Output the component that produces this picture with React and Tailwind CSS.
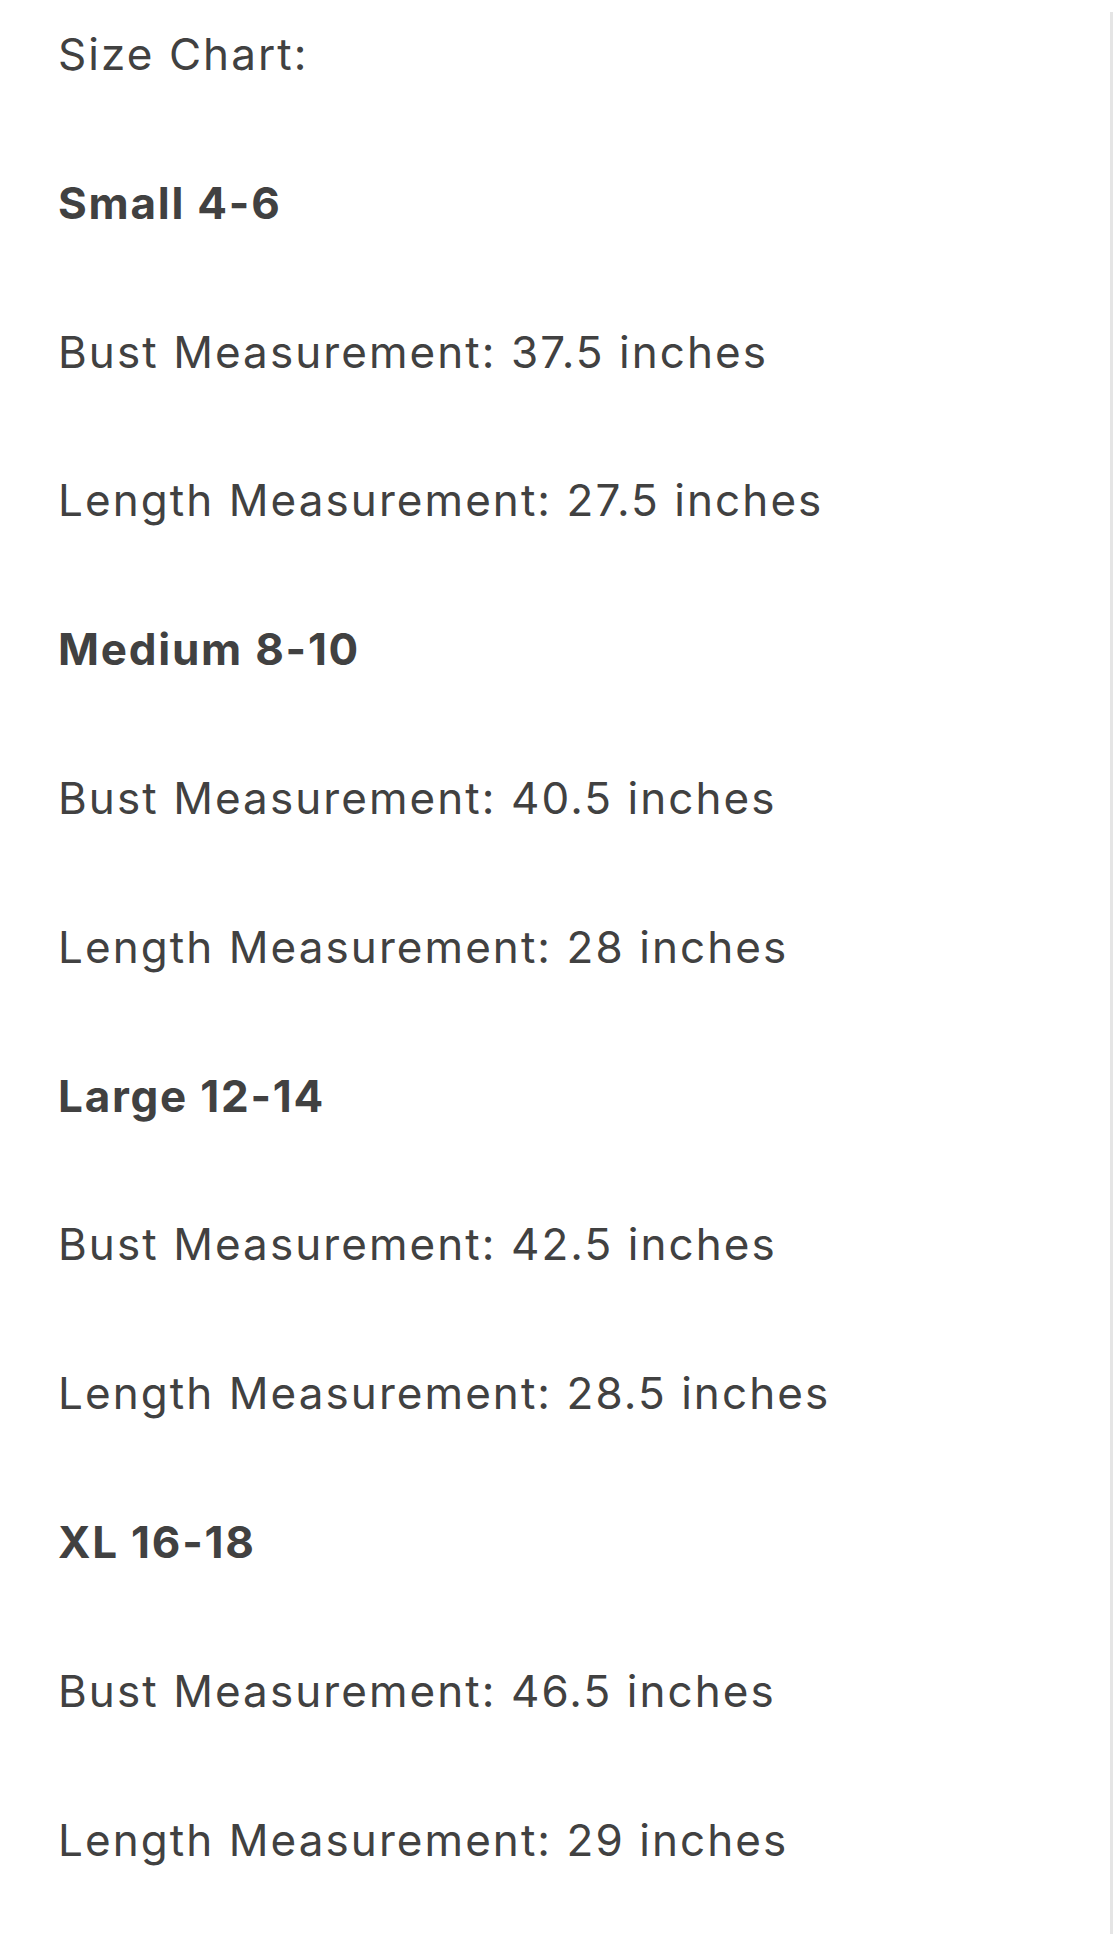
const lines = [
  { text: 'Size Chart:' },
  { text: 'Small 4-6', bold: true },
  { text: 'Bust Measurement: 37.5 inches' },
  { text: 'Length Measurement: 27.5 inches' },
  { text: 'Medium 8-10', bold: true },
  { text: 'Bust Measurement: 40.5 inches' },
  { text: 'Length Measurement: 28 inches' },
  { text: 'Large 12-14', bold: true },
  { text: 'Bust Measurement: 42.5 inches' },
  { text: 'Length Measurement: 28.5 inches' },
  { text: 'XL 16-18', bold: true },
  { text: 'Bust Measurement: 46.5 inches' },
  { text: 'Length Measurement: 29 inches' },
]

export default function App() {
  return (
    <div className="flex h-[1934px] w-[1113px] overflow-hidden bg-white">
      <div
        className="flex-1 pl-[58px] pt-[14px] text-[44px] text-[#414141]"
        style={{ fontFamily: 'Inter, "Noto Sans", sans-serif' }}
      >
        {lines.map((l, i) => (
          <div
            key={i}
            className={[
              'h-[148.8px] leading-[80px]',
              l.bold ? 'font-bold tracking-[0.04em]' : 'font-normal tracking-[0.047em]',
            ].join(' ')}
          >
            {l.text}
          </div>
        ))}
      </div>
      <div className="mt-[12px] w-[3px] bg-[#e5e5e5]" />
    </div>
  )
}
